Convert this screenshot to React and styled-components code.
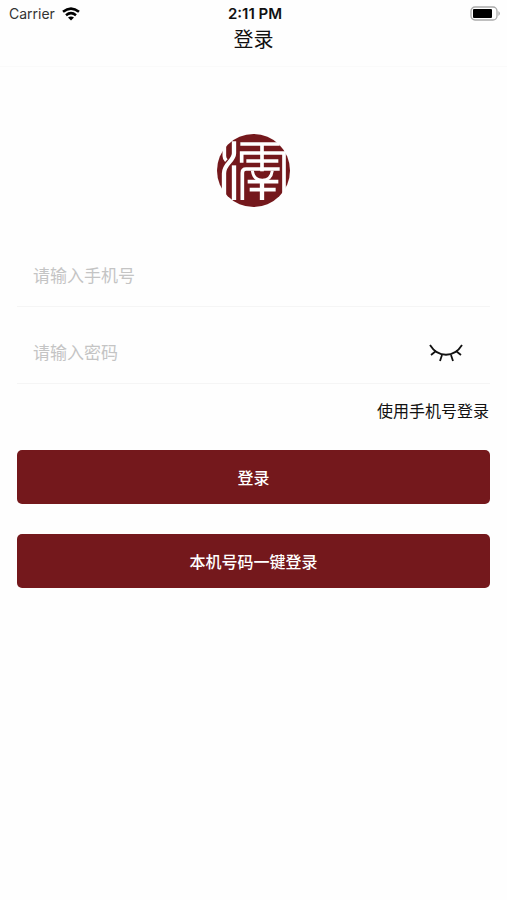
import React, { useState } from 'react'
import styled, { createGlobalStyle } from 'styled-components'

const GlobalStyle = createGlobalStyle`
  * {
    box-sizing: border-box;
  }
  body {
    margin: 0;
    background-color: #fefefe;
    color: #111;
    font-family: Inter, "Noto Sans CJK SC", sans-serif;
  }
`
const StatusBar = styled.div`
  display: grid;
  grid-template-columns: 1fr auto 1fr;
  align-items: center;
  height: 27px;
  padding: 0 6px 0 9px;
  font-size: 14px;
  line-height: 27px;
`
const Carrier = styled.div`
  display: flex;
  align-items: center;
  gap: 7px;
  color: #333;
`
const Time = styled.span`
  font-size: 15px;
  font-weight: 600;
`
const Battery = styled.svg`
  justify-self: end;
`
const Header = styled.header`
  height: 40px;
  border-bottom: 1px solid #fafafa;
`
const Title = styled.h1`
  margin: 0;
  font-size: 20px;
  font-weight: 400;
  line-height: 26px;
  text-align: center;
`
const Main = styled.main`
  display: flex;
  flex-direction: column;
  padding: 67px 17px 0;
`
const Logo = styled.svg`
  align-self: center;
  margin-bottom: 36px;
`
const Form = styled.form`
  display: flex;
  flex-direction: column;
`
const Field = styled.div`
  display: flex;
  align-items: center;
  height: 64px;
  margin-bottom: 13px;
  padding: 2px 26px 0 16px;
  border-bottom: 1px solid #f5f5f5;
`
const Input = styled.input`
  flex: 1;
  min-width: 0;
  padding: 0;
  border: 0;
  outline: none;
  background: none;
  color: #111;
  font-family: inherit;
  font-size: 17px;
  line-height: 24px;
  &::placeholder {
    color: #c4c4c4;
    opacity: 1;
  }
`
const EyeButton = styled.button`
  display: flex;
  padding: 0;
  border: 0;
  background: none;
  color: #111;
  cursor: pointer;
`
const SwitchLink = styled.a`
  align-self: flex-end;
  margin: 2px 0 27px;
  padding-right: 1px;
  color: #111;
  font-size: 16px;
  line-height: 24px;
  text-decoration: none;
`
const Button = styled.button`
  height: 54px;
  margin-bottom: 30px;
  padding: 2px 0 0;
  border: 0;
  border-radius: 5px;
  background-color: #74181c;
  color: #fff;
  font-family: inherit;
  font-size: 16px;
  font-weight: 500;
  line-height: 24px;
  cursor: pointer;
`

const App = () => {
  const [visible, setVisible] = useState(false)
  return (
    <>
      <GlobalStyle />
      <StatusBar>
        <Carrier>
          Carrier
          <svg width="18" height="14" viewBox="0 0 18 14" fill="none" stroke="#000" strokeWidth="2.6">
            <path d="M1 4.8Q9-1.6 17 4.8" />
            <path d="M4 8.2Q9 4.2 14 8.2" />
            <path d="M9 13.4 6 10.6Q9 8.2 12 10.6Z" fill="#000" stroke="none" />
          </svg>
        </Carrier>
        <Time>2:11 PM</Time>
        <Battery width="31" height="15" viewBox="0 0 31 15">
          <rect x="1" y="1" width="26" height="13" rx="4" fill="#fff" stroke="#aaa" strokeWidth="1.3" />
          <rect x="3" y="3" width="19" height="9" rx="1" fill="#000" />
          <path d="M28.5 5Q31 7.5 28.5 10Z" fill="#999" />
        </Battery>
      </StatusBar>
      <Header>
        <Title>登录</Title>
      </Header>
      <Main>
        <Logo width="73" height="73" viewBox="6 6 219 219">
          <circle cx="115.5" cy="115.5" r="109.5" fill="#74181c" />
          <g fill="none" stroke="#fff" strokeWidth="11">
            <path d="M28 34V72Q28 80 34 86" />
            <path d="M57 28V64C57 88 27 94 27 124V196" strokeWidth="13" />
            <path d="M57 100V204" strokeWidth="13" />
            <path d="M76 36H194" />
            <path d="M141 36V118" />
            <path d="M80 92V63H207V190" />
            <path d="M94 87H190" />
            <path d="M82 204V122Q82 111 93 111H194" />
            <path d="M112 116Q116 145 142 145T172 116" strokeWidth="9" />
            <path d="M98 149H190M104 173H182" />
            <path d="M141 147V204" strokeWidth="13" />
          </g>
        </Logo>
        <Form onSubmit={e => e.preventDefault()}>
          <Field>
            <Input type="tel" aria-label="手机号" placeholder="请输入手机号" />
          </Field>
          <Field>
            <Input type={visible ? 'text' : 'password'} aria-label="密码" placeholder="请输入密码" />
            <EyeButton type="button" aria-label="显示密码" onClick={() => setVisible(!visible)}>
              <svg width="36" height="20" viewBox="0 0 36 20" fill="none" stroke="currentColor" strokeWidth="1.8">
                <path d="M2 2C10 15 26 15 34 2" />
                <path d="M8 8 3 12M14 12 12 18M23 12 25 18M28 8 33 12" />
              </svg>
            </EyeButton>
          </Field>
          <SwitchLink href="#phone">使用手机号登录</SwitchLink>
          <Button type="submit">登录</Button>
          <Button type="button">本机号码一键登录</Button>
        </Form>
      </Main>
    </>
  )
}

export default App
